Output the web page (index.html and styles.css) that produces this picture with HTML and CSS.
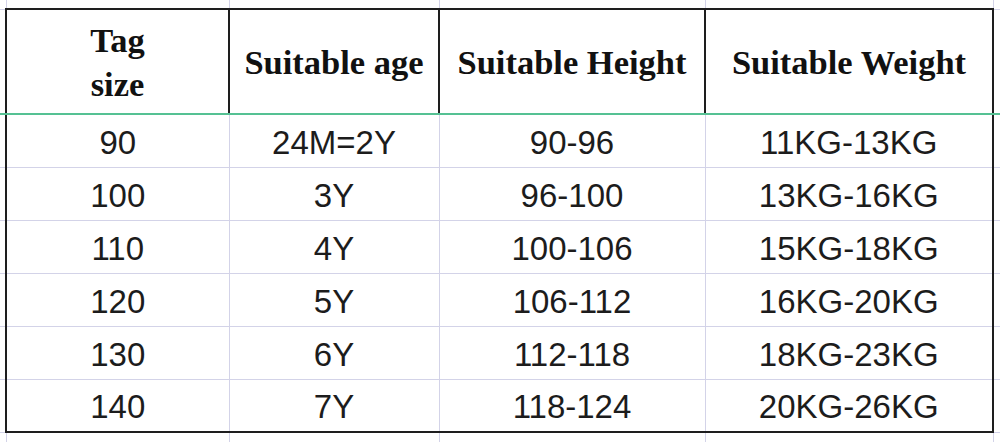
FILE: index.html
```html
<!DOCTYPE html>
<html lang="en">
<head>
<meta charset="utf-8">
<title>Size chart</title>
<link rel="stylesheet" href="styles.css">
</head>
<body>
<table class="sheet">
  <colgroup>
    <col class="c-edge-l">
    <col class="c-tag">
    <col class="c-age">
    <col class="c-height">
    <col class="c-weight">
    <col class="c-edge-r">
  </colgroup>
  <tr class="r-top">
    <td class="gl"></td><td class="gl"></td><td class="gl"></td><td class="gl"></td><td class="gl"></td><td class="gl"></td>
  </tr>
  <tr class="r-head">
    <td class="gl head-edge"></td>
    <th class="h first">Tag<br>size</th>
    <th class="h">Suitable age</th>
    <th class="h">Suitable Height</th>
    <th class="h last">Suitable Weight</th>
    <td class="gl head-edge"></td>
  </tr>
  <tr class="r-body">
    <td class="gl"></td><td class="d first">90</td><td class="d">24M=2Y</td><td class="d">90-96</td><td class="d last">11KG-13KG</td><td class="gl"></td>
  </tr>
  <tr class="r-body">
    <td class="gl"></td><td class="d first">100</td><td class="d">3Y</td><td class="d">96-100</td><td class="d last">13KG-16KG</td><td class="gl"></td>
  </tr>
  <tr class="r-body">
    <td class="gl"></td><td class="d first">110</td><td class="d">4Y</td><td class="d">100-106</td><td class="d last">15KG-18KG</td><td class="gl"></td>
  </tr>
  <tr class="r-body">
    <td class="gl"></td><td class="d first">120</td><td class="d">5Y</td><td class="d">106-112</td><td class="d last">16KG-20KG</td><td class="gl"></td>
  </tr>
  <tr class="r-body">
    <td class="gl"></td><td class="d first">130</td><td class="d">6Y</td><td class="d">112-118</td><td class="d last">18KG-23KG</td><td class="gl"></td>
  </tr>
  <tr class="r-body r-lastbody">
    <td class="gl"></td><td class="d first">140</td><td class="d">7Y</td><td class="d">118-124</td><td class="d last">20KG-26KG</td><td class="gl"></td>
  </tr>
  <tr class="r-bottom">
    <td class="gl"></td><td class="gl"></td><td class="gl"></td><td class="gl"></td><td class="gl"></td><td class="gl"></td>
  </tr>
</table>
</body>
</html>
```
FILE: styles.css
```css
html, body {
  margin: 0;
  padding: 0;
  background: #ffffff;
}

body {
  width: 1000px;
  height: 442px;
  overflow: hidden;
}

.sheet {
  width: 1000px;
  table-layout: fixed;
  border-collapse: collapse;
  border-spacing: 0;
}

.c-edge-l { width: 6px; }
.c-tag { width: 223px; }
.c-age { width: 210px; }
.c-height { width: 266px; }
.c-weight { width: 288px; }
.c-edge-r { width: 7px; }

.sheet td,
.sheet th {
  padding: 0;
  border: 1px solid #d3d3e8;
  text-align: center;
  vertical-align: middle;
}

.sheet .r-top td { height: 8px; border-top: none; }
.sheet .r-head > * { height: 103px; }
.sheet .r-body { height: 53px; }
.sheet .r-bottom td { height: 10px; border-bottom: none; }

.sheet tr > .gl:first-child { border-left: none; }
.sheet tr > .gl:last-child { border-right: none; }

.sheet .h {
  font-family: "Liberation Serif", "Times New Roman", serif;
  font-weight: bold;
  font-size: 34.5px;
  line-height: 44px;
  color: #111111;
  border-top: 2px solid #1e1e1e;
  border-left: 2px solid #1e1e1e;
  border-right: 2px solid #1e1e1e;
  border-bottom: 2px solid #55c193;
}

.sheet .head-edge {
  border-bottom: 2px solid #55c193;
}

.sheet .r-body > .d {
  font-family: "Liberation Sans", Arial, sans-serif;
  font-size: 33px;
  line-height: 36px;
  color: #1c1c1c;
  padding-top: 4px;
}

.sheet .d.first { border-left: 2px solid #1e1e1e; }
.sheet .d.last { border-right: 2px solid #1e1e1e; }
.sheet .r-lastbody .d { border-bottom: 2px solid #1e1e1e; }
```
